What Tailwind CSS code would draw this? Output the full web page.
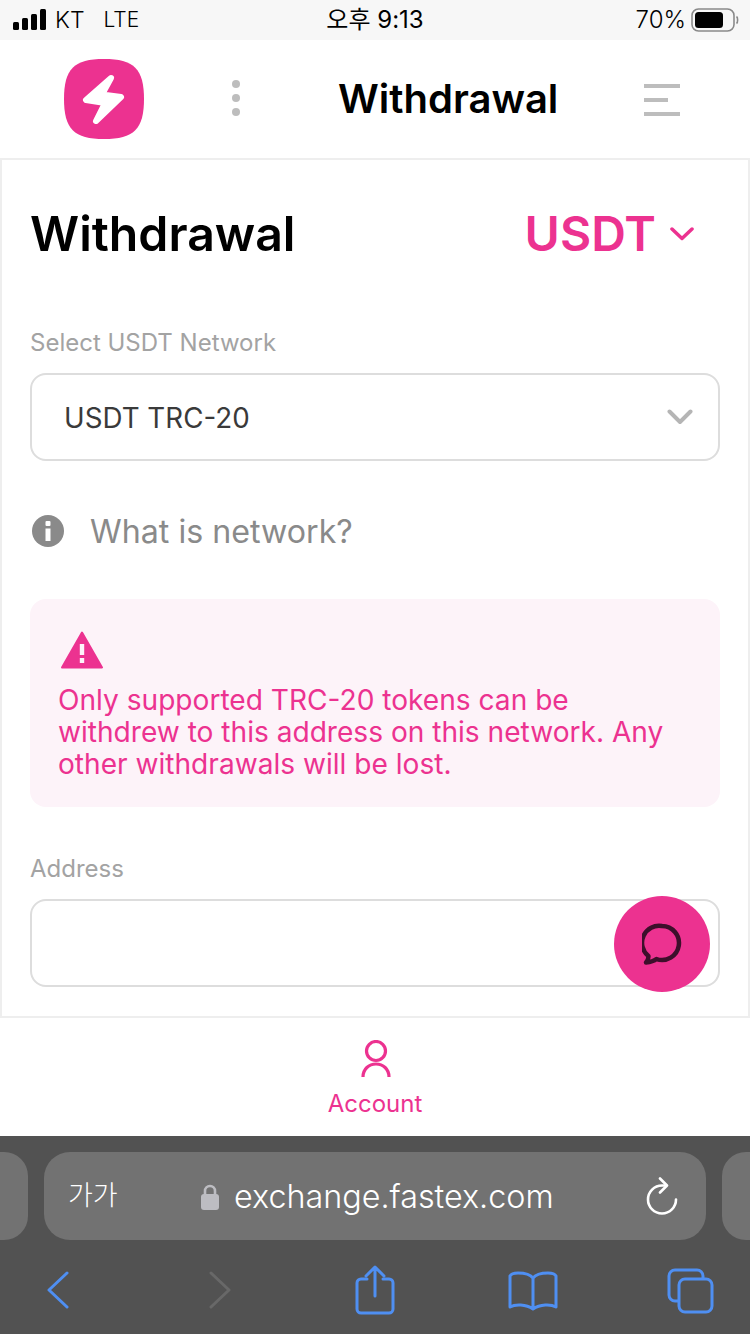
<!DOCTYPE html>
<html lang="en">
<head>
<meta charset="utf-8">
<script src="https://cdn.jsdelivr.net/npm/@tailwindcss/browser@4"></script>
<title>Withdrawal</title>
</head>
<body class="bg-white">
<div class="relative w-[750px] h-[1334px] overflow-hidden flex flex-col font-['Inter','Noto_Sans_CJK_KR',sans-serif]">
  <!-- status bar -->
  <div class="h-[40px] shrink-0 bg-[#f7f7f7] flex items-center justify-between pl-[13px] pr-[11px] text-[24px] text-black">
    <div class="flex items-center w-[240px]">
      <svg width="34" height="22" viewBox="0 0 34 22" fill="#000"><rect x="0" y="13" width="6" height="8" rx="1.5"/><rect x="9" y="9" width="6" height="12" rx="1.5"/><rect x="18" y="5" width="6" height="16" rx="1.5"/><rect x="27" y="0" width="6" height="21" rx="1.5"/></svg>
      <span class="ml-[8px] font-light text-[23px]">KT</span><span class="ml-[19px] font-light text-[21px]">LTE</span>
    </div>
    <div class="font-normal text-[24px] pr-[2px]">오후 9:13</div>
    <div class="flex items-center justify-end w-[240px]">
      <span class="font-light text-[24px]">70%</span>
      <svg class="ml-[5px]" width="48" height="24" viewBox="0 0 48 24" fill="none"><rect x="1" y="1" width="42" height="22" rx="6.5" stroke="#8a8a8a" stroke-width="1.6"/><rect x="4" y="4" width="28" height="16" rx="3.5" fill="#000"/><path d="M45.5 8.5c1.5 1 1.5 6 0 7" stroke="#8a8a8a" stroke-width="1.6"/></svg>
    </div>
  </div>
  <!-- header -->
  <header class="h-[118px] shrink-0 bg-white relative flex items-center pl-[64px]">
    <svg width="80" height="80" viewBox="0 0 80 80"><path d="M40 0C70 0 80 10 80 40S70 80 40 80 0 70 0 40 10 0 40 0Z" fill="#ec3290"/><path d="M47 19 L22 41 L41 44 L32 62 L57 38 L38 35.500 Z" fill="#fff" stroke="#fff" stroke-width="6" stroke-linejoin="round"/></svg>
    <div class="ml-[88px] mb-[2px] flex flex-col gap-[6px]">
      <span class="block w-[8px] h-[8px] rounded-full bg-[#bdbdbd]"></span>
      <span class="block w-[8px] h-[8px] rounded-full bg-[#bdbdbd]"></span>
      <span class="block w-[8px] h-[8px] rounded-full bg-[#bdbdbd]"></span>
    </div>
    <div class="ml-[98px] w-[219px] text-[40px] leading-[48px] font-semibold text-black whitespace-nowrap">Withdrawal</div>
    <div class="ml-[87px] mt-[2px] flex flex-col gap-[10px]">
      <span class="block w-[36px] h-[4px] bg-[#bdbdbd]"></span>
      <span class="block w-[24px] h-[4px] bg-[#bdbdbd]"></span>
      <span class="block w-[36px] h-[4px] bg-[#bdbdbd]"></span>
    </div>
  </header>
  <!-- main -->
  <main class="h-[860px] shrink-0 border-2 border-[#eeeeee] px-[28px] bg-white">
    <div class="flex items-center justify-between mt-[44px] h-[60px]">
      <h1 class="text-[48.2px] leading-[60px] font-semibold text-black">Withdrawal</h1>
      <div class="flex items-center pr-[26px]">
        <span class="text-[48px] leading-[60px] font-semibold text-[#ec3290]">USDT</span>
        <svg class="ml-[14px]" width="24" height="14" viewBox="0 0 24 14" fill="none"><path d="M2 2l10 9.500L22 2" stroke="#ec3290" stroke-width="3.500" stroke-linecap="round" stroke-linejoin="round"/></svg>
      </div>
    </div>
    <div class="mt-[64px] text-[24px] leading-[30px] text-[#a3a3a3]">Select USDT Network</div>
    <div class="mt-[15px] h-[88px] border-2 border-[#dddddd] rounded-[16px] flex items-center justify-between pl-[32px] pr-[25px]">
      <span class="text-[27.75px] leading-[36px] pt-[2px] text-[#3a3a3a]">USDT TRC-20</span>
      <svg width="26" height="16" viewBox="0 0 26 16" fill="none"><path d="M2.500 2.500l10.500 10.500L23.500 2.500" stroke="#b5b5b5" stroke-width="4" stroke-linecap="round" stroke-linejoin="round"/></svg>
    </div>
    <div class="mt-[50px] h-[40px] flex items-center">
      <svg class="ml-[2px]" width="32" height="32" viewBox="0 0 32 32"><circle cx="16" cy="16" r="16" fill="#8a8a8a"/><rect x="13.500" y="6" width="5" height="5" rx="1" fill="#fff"/><path d="M13.500 13.500h5V26h-5z" fill="#fff"/></svg>
      <span class="ml-[26px] text-[32.2px] leading-[40px] pt-[2px] text-[#8a8a8a]">What is network?</span>
    </div>
    <div class="mt-[48px] h-[208px] rounded-[16px] bg-[#fdf3f9] pl-[28px] pr-[28px] pt-[32px]">
      <svg class="ml-[3px]" width="42" height="38" viewBox="0 0 42 38"><path d="M21 1.500 41 36.500H1Z" fill="#ec3290" stroke="#ec3290" stroke-width="2" stroke-linejoin="round"/><rect x="18.800" y="13" width="4.400" height="11" fill="#fdf3f9"/><rect x="18.800" y="27" width="4.400" height="5" fill="#fdf3f9"/></svg>
      <p class="mt-[15px] text-[28.1px] leading-[32px] text-[#ec3290]">Only supported TRC-20 tokens can be withdrew to this address on this network. Any other withdrawals will be lost.</p>
    </div>
    <div class="mt-[47px] text-[24px] leading-[30px] text-[#a3a3a3]">Address</div>
    <div class="mt-[15px] h-[88px] border-2 border-[#dddddd] rounded-[16px]"></div>
  </main>
  <!-- account tab -->
  <nav class="h-[118px] shrink-0 bg-white flex flex-col items-center pt-[22px]">
    <svg class="ml-[2px]" width="30" height="38" viewBox="0 0 30 38" fill="none"><circle cx="15" cy="11" r="9.500" stroke="#ec3290" stroke-width="3.200"/><path d="M2 37c0-8 6-13 13-13s13 5 13 13" stroke="#ec3290" stroke-width="3.200"/></svg>
    <span class="mt-[11px] text-[24px] leading-[30px] text-[#ec3290]">Account</span>
  </nav>
  <!-- safari -->
  <div class="flex-1 bg-[#525252] flex flex-col">
    <div class="mt-[16px] h-[88px] flex gap-[16px]">
      <div class="w-[28px] h-full bg-[#727272] rounded-r-[24px]"></div>
      <div class="w-[662px] h-full bg-[#727272] rounded-[26px] flex items-center pl-[24px] pr-[28px] text-white">
        <span class="text-[27px] w-[133px] font-light">가가</span>
        <svg width="18" height="27" viewBox="0 0 18 27" fill="none"><path d="M4 13V8a5 5 0 0 1 10 0v5" stroke="#bdbdc2" stroke-width="2.600"/><rect x="0" y="11" width="18" height="16" rx="3" fill="#bdbdc2"/></svg>
        <span class="ml-[15px] text-[32.3px] leading-[40px] pt-[2px] font-light whitespace-nowrap">exchange.fastex.com</span>
        <svg class="ml-auto" width="32" height="38" viewBox="0 0 32 38" fill="none"><path d="M30 22.500a14 14 0 1 1-14-14h3" stroke="#fff" stroke-width="2.600" stroke-linecap="round"/><path d="M14 1.500l7 7-7 7" stroke="#fff" stroke-width="2.600" stroke-linecap="round" stroke-linejoin="round"/></svg>
      </div>
      <div class="w-[28px] h-full bg-[#727272] rounded-l-[24px]"></div>
    </div>
    <div class="relative flex-1">
      <svg class="absolute left-[47px] top-[31px]" width="22" height="38" viewBox="0 0 22 38" fill="none"><path d="M20 2 2 19l18 17" stroke="#4f8ff2" stroke-width="3" stroke-linecap="round" stroke-linejoin="round"/></svg>
      <svg class="absolute left-[209px] top-[31px]" width="22" height="38" viewBox="0 0 22 38" fill="none"><path d="M2 2l18 17L2 36" stroke="#686868" stroke-width="3" stroke-linecap="round" stroke-linejoin="round"/></svg>
      <svg class="absolute left-[355px] top-[25px]" width="40" height="50" viewBox="0 0 40 50" fill="none"><path d="M12 14H6a4 4 0 0 0-4 4v26a4 4 0 0 0 4 4h28a4 4 0 0 0 4-4V18a4 4 0 0 0-4-4h-6" stroke="#4f8ff2" stroke-width="3" stroke-linecap="round"/><path d="M20 31V3M11 11l9-9 9 9" stroke="#4f8ff2" stroke-width="3" stroke-linecap="round" stroke-linejoin="round"/></svg>
      <svg class="absolute left-[508px] top-[31px]" width="50" height="40" viewBox="0 0 50 40" fill="none"><path d="M25 7C22 3 16 2 10 2 6 2 3 3 2 5v31c5-3 16-3 23 2 7-5 18-5 23-2V5c-1-2-4-3-8-3-6 0-12 1-15 5Zm0 0v31" stroke="#4f8ff2" stroke-width="3" stroke-linejoin="round"/></svg>
      <svg class="absolute left-[667px] top-[28px]" width="48" height="46" viewBox="0 0 48 46" fill="none"><path d="M11 33H8a6 6 0 0 1-6-6V8a6 6 0 0 1 6-6h22a6 6 0 0 1 6 6v3" stroke="#4f8ff2" stroke-width="3"/><rect x="12" y="11" width="33" height="33" rx="6" stroke="#4f8ff2" stroke-width="3"/></svg>
    </div>
  </div>
  <!-- chat button -->
  <div class="absolute left-[614px] top-[896px] w-[96px] h-[96px] rounded-full bg-[#ec3290] flex items-center justify-center">
    <svg width="40" height="42" viewBox="0 0 40 42" fill="none"><path d="M20 3a17 17 0 1 1-5.500 33.100c-2.500 2-6 3-10.500 3.400 1.800-2 2.600-4 2.400-6.500A17 17 0 0 1 20 3Z" stroke="#3d0f2b" stroke-width="4.500" stroke-linejoin="round"/></svg>
  </div>
</div>
</body>
</html>
